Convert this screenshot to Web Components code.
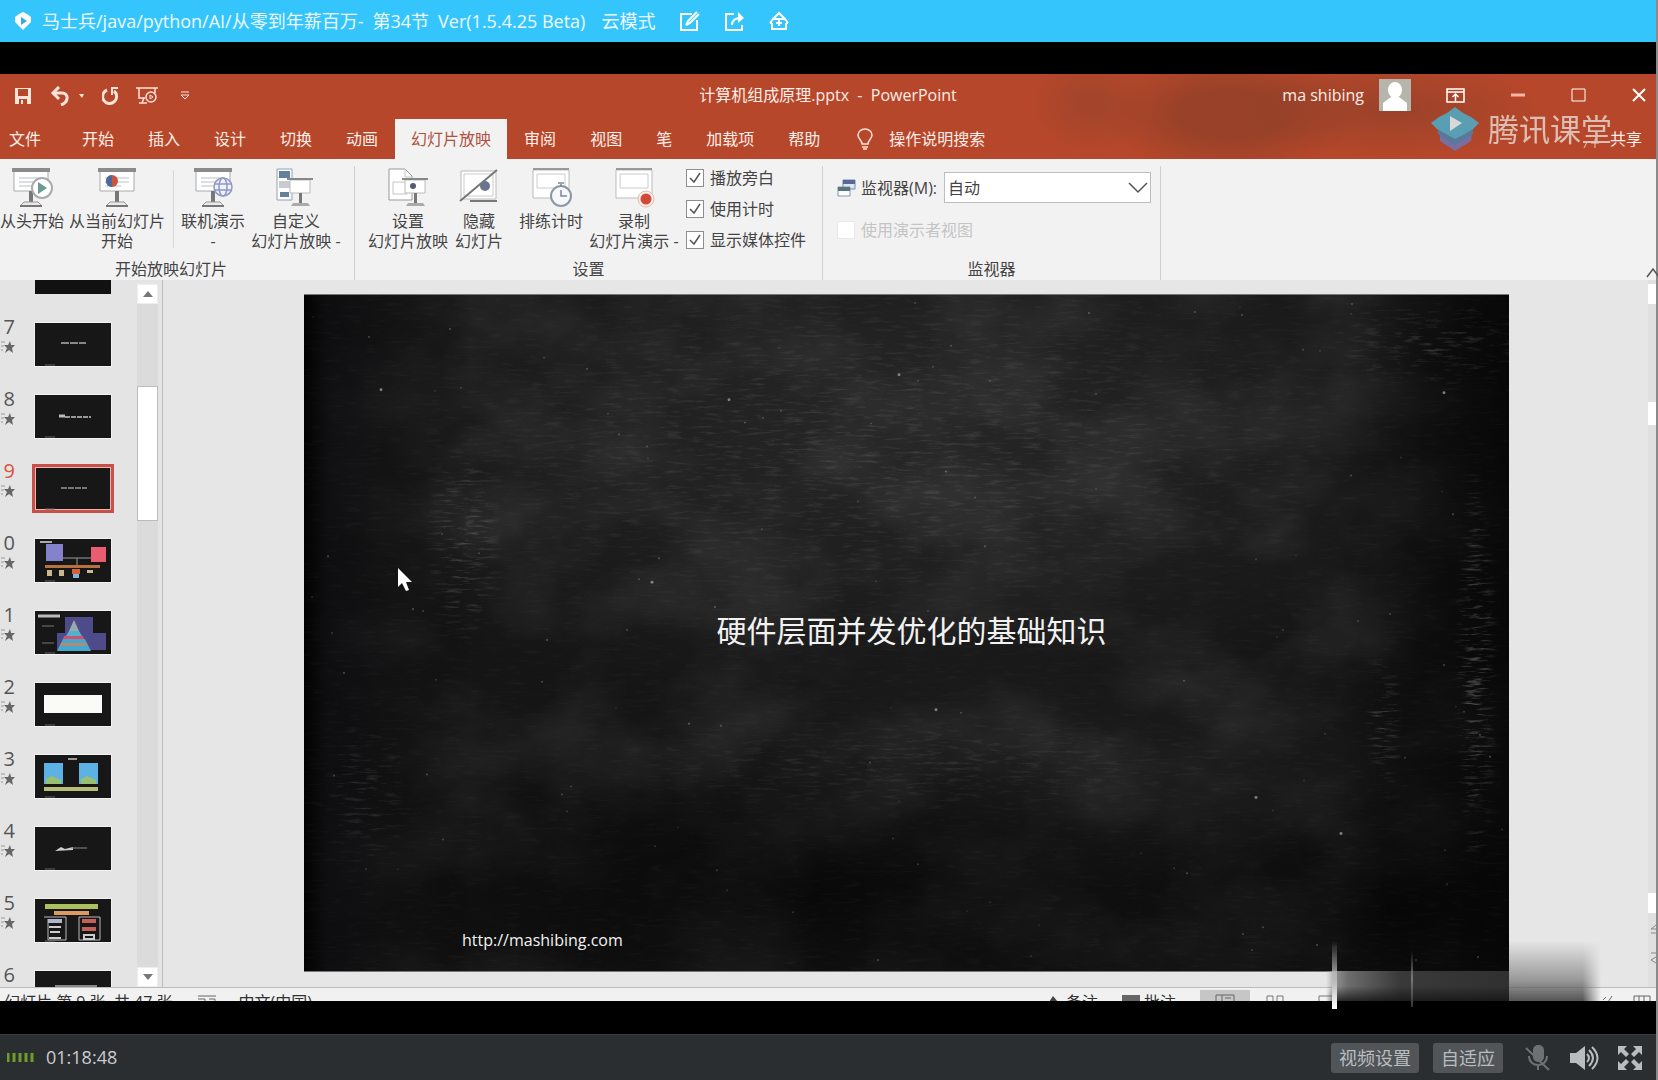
<!DOCTYPE html>
<html lang="zh-CN">
<head>
<meta charset="utf-8">
<title>计算机组成原理.pptx - PowerPoint</title>
<style>
html, body { margin: 0; height: 100%; background: #000; }
body { font: 16px/20px "Open Sans", "Noto Sans CJK SC", sans-serif; color: #444; overflow: hidden; }
class-player { height: 100vh; }
</style>
</head>
<body>
<class-player></class-player>
<script>
const define = (name, html) => {
  const t = document.createElement('template');
  t.innerHTML = '<style>*{box-sizing:border-box}button,input,select{font:inherit;color:inherit;margin:0}button{background:none;border:0;padding:0}svg{display:block;flex:none}</style>' + html;
  customElements.define(name, class extends HTMLElement {
    constructor() {
      super();
      this.attachShadow({ mode: 'open' }).append(t.content.cloneNode(true));
    }
  });
};

/* ---------- player title bar ---------- */
define('player-title', `
<style>
:host { display: flex; align-items: center; height: 42px; padding-left: 14px; background: #34c5fd; color: #eefaff; font-size: 18px; white-space: nowrap; flex: none; }
.name { display: flex; gap: 9px; margin: 0 16px 0 9px; }
.mode { margin-right: 24px; }
.tools { display: flex; gap: 23px; }
</style>
<svg width="19" height="20" viewBox="0 0 19 20"><path d="M9 1l4 2 4 3v5l-3 3-5 5-5-5-3-3V6l4-3z" fill="#fff"/><path d="M7 6l6 4-6 4z" fill="#34a9e6"/></svg>
<span class="name"><span>马士兵/java/python/AI/从零到年薪百万-</span><span>第34节</span><span>Ver(1.5.4.25 Beta)</span></span>
<span class="mode">云模式</span>
<div class="tools">
<button aria-label="编辑"><svg width="21" height="21" viewBox="0 0 21 21" fill="none" stroke="#fff" stroke-width="2"><path d="M13 3H2v16h16V9M7 14l2-4 9-9M7 14l4-2 9-9"/></svg></button>
<button aria-label="分享"><svg width="22" height="21" viewBox="0 0 22 21" fill="none" stroke="#fff" stroke-width="2"><path d="M11 3H3v16h16v-5M9 14c0-5 3-7 9-7"/><path d="M15 1l6 6-6 5z" fill="#fff" stroke="none"/></svg></button>
<button aria-label="主页"><svg width="22" height="21" viewBox="0 0 22 21" fill="none" stroke="#fff" stroke-width="2"><path d="M5 8l6-6 6 6M2 12l3-4h12l3 4M4 12v6h14v-6M2 12h2M18 12h2M11 9v6M8 12h6"/></svg></button>
</div>`);

/* ---------- PowerPoint title row ---------- */
define('ppt-title', `
<style>
:host { display: grid; grid-template-columns: 1fr auto 1fr; align-items: center; height: 42px; color: #fdeee9; white-space: nowrap; flex: none; }
.quick { display: flex; align-items: center; gap: 14px; padding: 2px 0 0 14px; }
.quick button:first-of-type { margin-right: 4px; }
.win { display: flex; align-items: center; justify-content: flex-end; padding-right: 10px; }
.win svg { margin-left: 15px; }
.win button svg { margin: 0; }
.win button { margin-left: 45px; }
.win button:first-of-type { margin-left: 35px; }
</style>
<div class="quick">
<button aria-label="保存"><svg width="18" height="18" viewBox="0 0 18 18"><path d="M1 1h16v16H1z" fill="#fde3da"/><path d="M4 2h10v7H4zM5 12h8v5H5z" fill="#b7472a"/><path d="M3 9h12v2H3zM7 13h2v4H7z" fill="#fde3da"/></svg></button>
<button aria-label="撤消"><svg width="38" height="20" viewBox="0 0 38 20" fill="none" stroke="#fde3da" stroke-width="3"><path d="M3 7h9c7 0 7 9-1 12"/><path d="M9 1L3 7l6 6"/><path d="M29 8h5l-2 4z" fill="#fde3da" stroke="none"/></svg></button>
<button aria-label="恢复"><svg width="20" height="20" viewBox="0 0 20 20" fill="none" stroke="#fde3da" stroke-width="3"><path d="M5 4a7 7 0 1 0 7 1"/><path d="M16 2h-6v7" stroke-width="2"/></svg></button>
<button aria-label="从头开始"><svg width="22" height="20" viewBox="0 0 22 20" fill="none" stroke="#fde3da" stroke-width="2"><path d="M0 2h22M3 2v10h6M19 2v5M3 17h8M8 12l-2 5" stroke-width="1.500"/><circle cx="15" cy="11" r="5" stroke-width="1.500"/><path d="M14 9l3 2-3 2z" stroke-width="1"/></svg></button>
<button aria-label="自定义快速访问工具栏"><svg width="24" height="12" viewBox="0 0 24 12" fill="none" stroke="#fde3da"><path d="M9 2h8M9 5h8l-4 4z"/></svg></button>
</div>
<span>计算机组成原理.pptx&nbsp; -&nbsp; PowerPoint</span>
<div class="win">
<span>ma shibing</span>
<svg width="32" height="32" viewBox="0 0 32 32"><path d="M0 0h32v32H0z" fill="#b5b5ab"/><ellipse cx="16" cy="11" rx="7" ry="8" fill="#fff"/><path d="M4 32V24l8-6h8l8 6v8z" fill="#fff"/></svg>
<button aria-label="功能区显示选项"><svg width="19" height="15" viewBox="0 0 19 15" fill="none" stroke="#fff" stroke-width="1.500"><path d="M1 1h17v13H1zM1 4h17M9.500 13V7M6.500 9l3-3 3 3"/></svg></button>
<button aria-label="最小化"><svg width="16" height="14"><path d="M1 7h14" stroke="#ffb6a2" stroke-width="3"/></svg></button>
<button aria-label="最大化"><svg width="16" height="14"><path d="M1 1h13v12H1z" fill="none" stroke="#fff"/></svg></button>
<button aria-label="关闭"><svg width="14" height="14"><path d="M1 1l12 12M13 1L1 13" stroke="#fff" stroke-width="2"/></svg></button>
</div>`);

/* ---------- ribbon tabs ---------- */
define('ppt-tabs', `
<style>
:host { display: flex; height: 43px; padding: 3px 14px 0 0; color: #fdeee9; white-space: nowrap; flex: none; position: relative; }
button { padding: 0 17px; }
button:first-of-type { padding: 0 24px 0 9px; }
.on { background: #f3f2f3; color: #b0513c; padding: 0 16px; }
.tell { display: flex; align-items: center; gap: 16px; padding-left: 20px; }
.share { margin-left: auto; padding: 0; display: flex; align-items: center; gap: 10px; }
.mark { position: absolute; right: 44px; top: -10px; display: flex; align-items: center; gap: 8px; font-size: 31px; line-height: 44px; color: #e4d3cb; opacity: .85; }
</style>
<button>文件</button><button>开始</button><button>插入</button><button>设计</button><button>切换</button><button>动画</button><button class="on">幻灯片放映</button><button>审阅</button><button>视图</button><button>笔</button><button>加载项</button><button>帮助</button>
<button class="tell"><svg width="16" height="22" viewBox="0 0 16 22" fill="none" stroke="#fde3da" stroke-width="1.500"><path d="M5 16c0-4-4-5-4-9a7 6 0 0 1 14 0c0 4-4 5-4 9zM5 19h6M6 21h4"/></svg>操作说明搜索</button>
<button class="share"><svg width="18" height="20" viewBox="0 0 18 20" fill="none" stroke="#f0c3b4"><path d="M2 19l3-6M13 10v9M9 14h8"/></svg>共享</button>
<div class="mark"><svg width="50" height="46" viewBox="0 0 50 46"><path d="M25 14l17 12-1 9-16 10-15-10V26z" fill="#6f76b4"/><path d="M25 24l18-4v8L25 39 8 28v-8z" fill="#4a82ad"/><path d="M25 1l8 6 8 4 8 6-6 6-8 5-10 5-9-5-9-5-6-6 8-6 8-4z" fill="#4caecb"/><path d="M20 10l12 7-12 8z" fill="#e1f2f5"/></svg><span>腾讯课堂</span></div>`);

/* ---------- ribbon pieces ---------- */
define('ribbon-button', `
<style>
:host { display: block; flex: none; }
button { display: flex; flex-direction: column; align-items: center; width: 100%; text-align: center; line-height: 20px; white-space: nowrap; }
.pic { height: 43px; width: 42px; }
</style>
<button><span class="pic"><slot name="icon"></slot></span><span><slot></slot></span></button>`);

define('ribbon-group', `
<style>
:host { display: flex; flex-direction: column; justify-content: space-between; height: 114px; border-right: 1px solid #cfcfcf; flex: none; box-sizing: border-box; }
.row { display: flex; align-items: flex-start; }
.cap { text-align: center; line-height: 22px; height: 22px; }
</style>
<div class="row"><slot></slot></div><div class="cap"><slot name="caption"></slot></div>`);

define('check-option', `
<style>
:host { display: block; }
label { display: flex; align-items: center; gap: 6px; height: 31px; white-space: nowrap; }
.box { position: relative; display: flex; }
input { appearance: none; width: 18px; height: 18px; border: 1px solid #8d8d8d; background: #fff; }
svg { position: absolute; left: 0; top: 0; pointer-events: none; }
:host([off]) label { color: #c4c4c4; }
:host([off]) input { border-color: #e8e8e8; }
:host([off]) svg { display: none; }
</style>
<label><span class="box"><input type="checkbox"><svg width="18" height="18" viewBox="0 0 18 18" fill="none" stroke="#555" stroke-width="1.500"><path d="M4 9l4 4 6-9"/></svg></span><slot></slot></label>`);

const board = '<path d="M2 2h34v21H2z" fill="#fff" stroke="#aaa"/><path d="M0 0h38v4H0z" fill="#8b8b8b"/><path d="M17 23h4v12h-4z" fill="#777"/><path d="M12 34h14l4 4H8z" fill="#e9e9e9" stroke="#999"/><path d="M8 38h22" stroke="#777" stroke-width="2"/>';
const lines = '<path d="M7 10h24M7 14h24M7 18h16" stroke="#b9bfc8"/>';
const ico = (s) => `<svg slot="icon" width="42" height="40" viewBox="0 0 42 40">${s}</svg>`;

define('ppt-ribbon', `
<style>
:host { display: flex; height: 121px; padding-top: 7px; background: #f3f2f3; white-space: nowrap; flex: none; position: relative; }
svg { display: block; }
ribbon-button { margin-top: 2px; }
.first { padding-right: 12px; }
.sep { width: 1px; height: 78px; background: #d8d8d8; margin: 4px 7px 0 8px; }
.checks { display: flex; flex-direction: column; padding: 0 16px 0 6px; margin-top: -4px; }
.mon { display: flex; flex-direction: column; padding: 6px 9px 0 14px; gap: 11px; }
.mon div { display: flex; align-items: center; }
.mon label { margin: 0 7px 0 5px; }
.pick { position: relative; display: flex; align-items: center; }
select { appearance: none; width: 207px; height: 31px; border: 1px solid #bdbdbd; background: #fff; padding: 0 3px; border-radius: 0; }
.pick svg { position: absolute; right: 3px; pointer-events: none; }
.fold { position: absolute; right: -5px; bottom: 2px; }
</style>
<ribbon-group class="first">
<ribbon-button style="width:64px">${ico(`<g transform="translate(1)">${board}${lines}</g><circle cx="31" cy="20" r="10" fill="#fff" stroke="#aaa" stroke-width="2"/><path d="M27 14l9 6-9 6z" fill="#6b9c91"/>`)}从头开始</ribbon-button>
<ribbon-button style="width:96px;margin-left:5px">${ico(`<g transform="translate(2)">${board}${lines}<circle cx="14" cy="13" r="6" fill="#c9543a"/><path d="M14 13V7a6 6 0 0 0 0 12z" fill="#4a6a9e"/></g>`)}从当前幻灯片<br>开始</ribbon-button>
<span class="sep"></span>
<ribbon-button style="width:64px">${ico(`<g transform="translate(2)">${board}${lines}</g><g fill="#eef1f8" stroke="#8f98c4" stroke-width="1.500"><circle cx="31" cy="19" r="9"/><ellipse cx="31" cy="19" rx="4" ry="9"/><path d="M23 16h16M23 22h16"/></g>`)}联机演示<br>-</ribbon-button>
<ribbon-button style="width:92px;margin-left:5px">${ico(`<path d="M2 1h15v31H2z" fill="#fff" stroke="#8fa0b4"/><path d="M4 3h11v7H4zM5 24h9v5H5z" fill="#65809c"/><path d="M4 13h11v7H4z" fill="#c8ccd2"/><path d="M15 12h20v13H15z" fill="#fff" stroke="#bbb"/><path d="M12 10h26v2H12z" fill="#888"/><path d="M24 25h3v10h-3z" fill="#777"/><path d="M18 35h15l2 3H16z" fill="#aaa"/>`)}自定义<br>幻灯片放映 -</ribbon-button>
<span slot="caption">开始放映幻灯片</span></ribbon-group>
<ribbon-group>
<ribbon-button style="width:80px;margin-left:13px">${ico(`<path d="M2 1h16l7 7v24H2z" fill="#fff" stroke="#999"/><path d="M18 1v8h7M6 14h14v12H6z" fill="none" stroke="#c4c4c4"/><path d="M18 12h20v13H18z" fill="#fff" stroke="#bbb"/><path d="M15 10h26v2H15z" fill="#888"/><circle cx="26" cy="18" r="3" fill="#555a70"/><path d="M27 25h3v10h-3z" fill="#777"/><path d="M21 35h15l2 3H19z" fill="#aaa"/>`)}设置<br>幻灯片放映</ribbon-button>
<ribbon-button style="width:48px;margin-left:7px">${ico(`<path d="M3 3h35v28H3z" fill="#fff" stroke="#bbb"/><path d="M6 6h29v22H6z" fill="none" stroke="#ccc"/><circle cx="27" cy="18" r="5" fill="#6a7390"/><path d="M2 33L39 2M12 33h27" stroke="#777" stroke-width="2"/>`)}隐藏<br>幻灯片</ribbon-button>
<ribbon-button style="width:64px;margin-left:16px">${ico(`<path d="M3 2h36v28H3z" fill="#fff" stroke="#bbb"/><path d="M3 1h36" stroke="#999" stroke-width="2"/><path d="M7 6h28v14H7z" fill="none" stroke="#ccc"/><circle cx="31" cy="28" r="10" fill="#f6f8fb" stroke="#8b97a8" stroke-width="2"/><path d="M28 15h6M31 16v3M31 22v6h6" fill="none" stroke="#7b8798" stroke-width="1.500"/>`)}排练计时</ribbon-button>
<ribbon-button style="width:92px;margin-left:5px">${ico(`<path d="M3 2h36v28H3z" fill="#fff" stroke="#bbb"/><path d="M3 1h36" stroke="#999" stroke-width="2"/><path d="M7 6h28v14H7z" fill="none" stroke="#ccc"/><circle cx="33" cy="31" r="8" fill="#fbeee9" stroke="#e3bdb2"/><circle cx="33" cy="31" r="5.500" fill="#cf4b38"/>`)}录制<br>幻灯片演示 -</ribbon-button>
<div class="checks"><check-option>播放旁白</check-option><check-option>使用计时</check-option><check-option>显示媒体控件</check-option></div>
<span slot="caption">设置</span></ribbon-group>
<ribbon-group>
<div class="mon"><div>
<svg width="19" height="18" viewBox="0 0 19 18"><path d="M6 1h12v9H6z" fill="#dfe5f2" stroke="#7587b5"/><path d="M6 1h12v4H6z" fill="#566894"/><path d="M1 8h12v9H1z" fill="#fff" stroke="#8793ae"/><path d="M1 8h12v4H1z" fill="#56777f"/></svg>
<label for="m">监视器(M):</label><span class="pick"><select id="m"><option>自动</option></select><svg width="20" height="12" viewBox="0 0 20 12" fill="none" stroke="#555" stroke-width="1.500"><path d="M1 1l9 9 9-9"/></svg></span></div>
<check-option off>使用演示者视图</check-option></div>
<span slot="caption">监视器</span></ribbon-group>
<svg class="fold" width="16" height="10" fill="none" stroke="#555" stroke-width="1.500"><path d="M2 9l6-8 6 8"/></svg>`);

/* ---------- slide thumbnails ---------- */
define('slide-thumb', `
<style>
:host { display: grid; grid-template-columns: 14px 76px; column-gap: 21px; height: 72px; align-items: start; flex: none; color: #555; font-size: 20px; }
.no { display: flex; flex-direction: column; align-items: flex-end; line-height: 16px; width: 15px; margin-top: -4px; }
.no svg { margin-top: 6px; }
:host([sel]) { color: #d8553f; }
.pic { height: 43px; background: #171717; overflow: hidden; outline: 1px solid #f2f2f2; }
:host([sel]) .pic { outline: 3px solid #c9504a; box-shadow: inset 0 0 0 1px #e8b7ad; }
</style>
<div class="no"><slot></slot><svg width="14" height="12" viewBox="0 0 14 12"><path d="M9 0l1 4h4l-3 3 1 5-4-3-4 3 2-5-3-3h4z" fill="#666"/><path d="M0 1h4M0 5h3M0 9h2" stroke="#999"/></svg></div>
<div class="pic"><slot name="art"></slot></div>`);

const art = (s) => `<svg slot="art" width="76" height="43" viewBox="0 0 76 43">${s}<path d="M10 42h10" stroke="#666"/></svg>`;
define('thumb-list', `
<style>
:host { display: flex; width: 163px; background: #e5e4e5; border-right: 1px solid #bdbdbd; overflow: hidden; flex: none; box-sizing: border-box; }
.list { flex: 1; display: flex; flex-direction: column; height: 0; }
.top { height: 14px; width: 76px; margin: 0 0 29px 35px; background: #111; flex: none; }
.bar { width: 21px; margin: 4px 4px 0 0; background: #dcdbdc; display: flex; flex-direction: column; }
.bar button { height: 20px; background: #fff; display: flex; align-items: center; justify-content: center; border: 1px solid #eee; }
.thumb { height: 135px; margin-top: 82px; background: #fff; border: 1px solid #bbb; }
.bar button:last-child { margin-top: auto; }
svg { display: block; }
</style>
<div class="list"><div class="top"></div>
<slide-thumb>7${art('<path d="M26 20h25" stroke="#888" stroke-width="2" stroke-dasharray="8 1"/>')}</slide-thumb>
<slide-thumb>8${art('<path d="M24 21h6" stroke="#bbb" stroke-width="3"/><path d="M30 22h26" stroke="#999" stroke-width="2" stroke-dasharray="5 1"/>')}</slide-thumb>
<slide-thumb sel>9${art('<path d="M26 21h26" stroke="#777" stroke-width="2" stroke-dasharray="6 1"/>')}</slide-thumb>
<slide-thumb>0${art('<path d="M5 3h12" stroke="#aaa" stroke-width="2"/><path d="M11 5h17v17H11z" fill="#8382ca"/><path d="M56 8h15v15H56z" fill="#ea5c70"/><path d="M28 19h28M42 19v8" stroke="#999"/><path d="M10 26h55v3H10z" fill="#b5713f"/><path d="M12 31h5v6h-5zM24 31h5v6h-5zM52 31h6v3h-6z" fill="#c9b98f"/><path d="M37 30h8v5h-8z" fill="#d4603c"/><path d="M38 35h6v4h-6z" fill="#7cb8d8"/>')}</slide-thumb>
<slide-thumb>1${art('<path d="M3 5h22" stroke="#bbb" stroke-width="3"/><path d="M7 15h12M7 32h12" stroke="#777"/><path d="M30 6h28v16h13v17H22V22h8z" fill="#4d4b8a"/><path d="M39 9l5 11h-10z" fill="#9aa"/><path d="M34 20h10l3 5H31z" fill="#53b0d0"/><path d="M29 25h19l1 3H28z" fill="#d4506a"/><path d="M28 28h22l6 12H22z" fill="#45a8cc"/><path d="M26 32h26v3H25z" fill="#b08b76"/>')}</slide-thumb>
<slide-thumb>2${art('<path d="M9 12h58v18H9z" fill="#fafaf8"/>')}</slide-thumb>
<slide-thumb>3${art('<path d="M33 4h9" stroke="#999" stroke-width="2"/><path d="M9 8h19v21H9zM44 8h19v21H44z" fill="#5cb2e4"/><path d="M11 29v-5l6-3 9 4v4zM46 29v-5l6-3 9 4v4z" fill="#98c070"/><path d="M9 32h54v4H9z" fill="#b5bd77"/>')}</slide-thumb>
<slide-thumb>4${art('<path d="M20 24l6-4 4 2 8-2v3z" fill="#ccc"/><path d="M36 21h16" stroke="#888"/>')}</slide-thumb>
<slide-thumb>5${art('<path d="M10 5h53v5H10z" fill="#abc05e"/><path d="M19 12h35v4H19z" fill="#dc9a62"/><path d="M9 18h22v23H13V20M44 18h21v23H44z" fill="none" stroke="#bbb"/><path d="M13 20h14v4H13z" fill="#b0b5cc"/><path d="M47 20h14v4H47zM47 28h14v4H47z" fill="#c65e5a"/><path d="M14 28h12M15 33h10M14 39h12M49 36h10v4H49z" stroke="#ccc" fill="none" stroke-width="2"/>')}</slide-thumb>
<slide-thumb>6${art('<path d="M20 16h42" stroke="#888" stroke-width="4"/>')}</slide-thumb>
</div>
<div class="bar"><button aria-label="向上"><svg width="10" height="6"><path d="M0 6l5-6 5 6z" fill="#777"/></svg></button><div class="thumb"></div><button aria-label="向下"><svg width="10" height="6"><path d="M0 0h10L5 6z" fill="#777"/></svg></button></div>`);

/* ---------- slide canvas ---------- */
let seed = 11;
const rnd = () => (seed = (seed * 16807) % 2147483647) / 2147483647;
let specks = '';
for (let i = 0; i < 120; i++) {
  const x = Math.round(rnd() * 1190 + 8), y = Math.round(rnd() * 660 + 8), o = (rnd() * .3 + .1).toFixed(2);
  specks += `<circle cx="${x}" cy="${y}" r="1" fill="#bbb" opacity="${o}"/>`;
}
for (const [x, y] of [[77, 95], [595, 80], [1140, 98], [632, 416], [1037, 540], [425, 105], [348, 288], [952, 504]]) {
  specks += `<ellipse cx="${x}" cy="${y}" rx="1.500" ry="1.500" fill="#aaa" opacity=".7"/>`;
}
define('slide-canvas', `
<style>
:host { display: flex; flex: 1; padding: 14px 139px 15px 141px; background: #e6e6e6; min-width: 0; }
.slide { position: relative; flex: 1; background: #151515; border-top: 1px solid #777; border-bottom: 1px solid #777; color: #f2f2f2; display: flex; flex-direction: column; overflow: hidden; }
.chalk { position: absolute; inset: 0; width: 100%; height: 100%; }
h1 { position: relative; margin: 316px 0 0 10px; font: 400 30px/40px "Open Sans", "Noto Sans CJK SC", sans-serif; text-align: center; }
a { position: relative; color: inherit; text-decoration: none; margin: auto auto 21px 158px; line-height: 20px; }
.cursor { position: absolute; left: 93px; top: 273px; }
</style>
<div class="slide">
<svg class="chalk" viewBox="0 0 1205 678" preserveAspectRatio="none">
<defs>
<filter id="streak" x="0" y="0" width="1" height="1"><feTurbulence type="fractalNoise" baseFrequency="0.05 0.35" numOctaves="4" seed="4"/><feColorMatrix values="0 0 0 0 .7  0 0 0 0 .7  0 0 0 0 .7  1.6 0 0 0 -.82"/></filter>
<filter id="cloud" x="0" y="0" width="1" height="1"><feTurbulence type="fractalNoise" baseFrequency="0.008 0.012" numOctaves="4" seed="9"/><feColorMatrix values="0 0 0 0 .6  0 0 0 0 .6  0 0 0 0 .6  .5 0 0 0 -.18"/></filter>
<radialGradient id="g"><stop offset="0" stop-color="#fff" stop-opacity="1"/><stop offset="1" stop-color="#fff" stop-opacity="0"/></radialGradient>
<radialGradient id="k"><stop offset="0" stop-color="#000" stop-opacity=".6"/><stop offset="1" stop-color="#000" stop-opacity="0"/></radialGradient>
<linearGradient id="e"><stop offset="0" stop-color="#020203"/><stop offset=".02" stop-color="#0c0c0e" stop-opacity=".8"/><stop offset=".1" stop-color="#0e0f11" stop-opacity=".3"/><stop offset=".14" stop-color="#000" stop-opacity="0"/><stop offset=".86" stop-color="#000" stop-opacity="0"/><stop offset=".93" stop-color="#050505" stop-opacity=".5"/><stop offset="1" stop-color="#040404" stop-opacity=".8"/></linearGradient>
<mask id="m"><rect width="1205" height="678" fill="#1a1a1a"/><ellipse cx="580" cy="150" rx="480" ry="180" fill="url(#g)" opacity=".4"/><ellipse cx="160" cy="250" rx="40" ry="110" fill="url(#g)"/><ellipse cx="620" cy="470" rx="320" ry="50" fill="url(#g)" opacity=".35"/><ellipse cx="60" cy="500" rx="50" ry="80" fill="url(#g)" opacity=".5"/></mask>
<mask id="r"><ellipse cx="1172" cy="380" rx="22" ry="220" fill="url(#g)"/><ellipse cx="1080" cy="430" rx="20" ry="80" fill="url(#g)" opacity=".7"/><ellipse cx="1130" cy="50" rx="110" ry="50" fill="url(#g)" opacity=".4"/></mask>
</defs>
<ellipse cx="600" cy="130" rx="640" ry="300" fill="url(#g)" opacity=".08"/>
<ellipse cx="720" cy="480" rx="420" ry="120" fill="url(#g)" opacity=".04"/>
<rect width="1205" height="678" filter="url(#cloud)" opacity=".4"/>
<ellipse cx="480" cy="600" rx="620" ry="170" fill="url(#k)"/>
<ellipse cx="1100" cy="620" rx="300" ry="130" fill="url(#k)"/>
<rect width="1205" height="678" fill="url(#e)"/>
<g mask="url(#m)"><rect width="1205" height="678" filter="url(#streak)" opacity=".55"/></g>
<g mask="url(#r)"><rect width="1205" height="678" filter="url(#streak)" opacity=".8"/></g>
${specks}
</svg>
<h1>硬件层面并发优化的基础知识</h1>
<a href="http://mashibing.com">http://mashibing.com</a>
<svg class="cursor" width="16" height="24" viewBox="0 0 16 24"><path d="M1 0v19l4-4 4 8 3-1-3-8h6z" fill="#fff"/></svg>
</div>`);

define('edge-scroll', `
<style>
:host { display: flex; flex-direction: column; width: 8px; background: #e0e0e0; flex: none; }
div { background: #fff; height: 20px; }
.a { margin-top: 4px; } .b { margin-top: 98px; height: 23px; } .c { margin-top: 468px; }
svg { margin-top: 10px; }
</style><div class="a"></div><div class="b"></div><div class="c"></div><svg width="8" height="50" fill="none" stroke="#888"><path d="M8 2l-5 4h5M3 10h5M3 30h5M8 34l-5 3 5 3"/></svg>`);

/* ---------- status bar ---------- */
define('ppt-status', `
<style>
:host { display: flex; align-items: flex-start; height: 14px; border-top: 1px solid #bbb; background: #f1f1f1; white-space: nowrap; overflow: hidden; color: #333; flex: none; padding-top: 4px; box-sizing: border-box; }
.r { margin-left: auto; display: flex; padding-right: 5px; }
svg { margin-top: 3px; }
.on { background: #c6c6c6; width: 50px; margin-top: -2px; padding: 1px 15px; }
.page { margin: 0 24px 0 4px; }
</style>
<span class="page">幻灯片 第 9 张, 共 47 张</span>
<svg width="20" height="16" fill="none" stroke="#666"><path d="M1 1h18M1 4h7v9M12 4h6v9"/></svg>
<span style="margin-left:22px">中文(中国)</span>
<div class="r">
<svg width="18" height="16"><path d="M1 7l4-6 5 6z" fill="#444"/></svg><span style="margin-right:24px">备注</span>
<svg width="18" height="16"><path d="M0 0h18v16H0z" fill="#666"/></svg><span style="margin:0 24px 0 4px">批注</span>
<span class="on"><svg width="20" height="16" fill="none" stroke="#666"><path d="M1 1h18v14H1zM7 1v14M10 4h6"/></svg></span>
<svg style="margin-left:16px;margin-right:34px" width="18" height="16" fill="none" stroke="#777"><path d="M1 1h6v6H1zM11 1h6v6h-6z"/></svg>
<svg style="margin-right:265px" width="20" height="16" fill="none" stroke="#777"><path d="M1 1h18v14H1z"/></svg>
<svg style="margin-right:20px" width="10" height="16" fill="none" stroke="#666"><path d="M0 5l3-3M5 7l4-6"/></svg>
<svg width="18" height="16" fill="none" stroke="#666"><path d="M1 1h16v14H1zM6 1v6M11 1v6"/></svg>
</div>`);

define('ppt-window', `
<style>
:host { display: flex; flex-direction: column; flex: 1; min-height: 0; }
.head { background: radial-gradient(ellipse 130px 60px at 1230px 40px, rgba(145,64,40,.8) 40%, transparent), radial-gradient(ellipse 160px 50px at 1390px 35px, rgba(150,66,42,.8) 10%, transparent), radial-gradient(ellipse 60px 50px at 1090px 30px, rgba(155,68,43,.7) 20%, transparent), #b7472a; }
.work { display: flex; flex: 1; min-height: 0; }
</style>
<div class="head"><ppt-title></ppt-title><ppt-tabs></ppt-tabs></div>
<ppt-ribbon></ppt-ribbon>
<div class="work"><thumb-list></thumb-list><slide-canvas></slide-canvas><edge-scroll></edge-scroll></div>
<ppt-status></ppt-status>`);

/* ---------- player controls ---------- */
define('player-controls', `
<style>
:host { display: flex; align-items: center; height: 46px; padding: 0 13px 0 7px; background: #2b2e31; border-top: 1px solid #3a3a3c; color: #c9cccf; font-size: 18px; line-height: 22px; white-space: nowrap; flex: none; box-sizing: border-box; }
.t { margin-left: 12px; margin-right: auto; padding-bottom: 2px; }
.b { height: 30px; padding: 0 8px; background: #515558; border-radius: 3px; color: #b9bdc0; margin-right: 14px; line-height: 28px; }
.i { margin-left: 18px; }
.mic { margin-left: 8px; }
</style>
<svg width="27" height="12"><path d="M1 1v9M7 1v9M13 1v9M19 1v9M25 1v9" stroke="#6f9c2c" stroke-width="3"/></svg>
<span class="t">01:18:48</span>
<button class="b">视频设置</button><button class="b">自适应</button>
<button class="i mic" aria-label="麦克风"><svg width="26" height="28" viewBox="0 0 26 28" fill="none" stroke="#6d7174" stroke-width="2"><rect x="9" y="2" width="9" height="15" rx="4" fill="#6d7174"/><path d="M4 12c0 12 18 12 18 0M13 21v5M1 4l23 22"/></svg></button>
<button class="i" aria-label="音量"><svg width="30" height="28" viewBox="0 0 30 28" fill="none" stroke="#b9bdc0" stroke-width="2"><path d="M1 9h6l9-7v24l-9-7H1z" fill="#b9bdc0" stroke="none"/><path d="M18 10q4 4 0 8M20 6q8 8 0 16M23 3q11 11 0 22"/></svg></button>
<button class="i" aria-label="全屏"><svg width="26" height="26" viewBox="0 0 26 26"><path d="M1 1h9L7 4l5 5-3 3-5-5-3 3zM25 1v9l-3-3-5 5-3-3 5-5-3-3zM1 25v-9l3 3 5-5 3 3-5 5 3 3zM25 25h-9l3-3-5-5 3-3 5 5 3-3z" fill="#b9bdc0"/></svg></button>`);

/* ---------- whole player ---------- */
define('class-player', `
<style>
:host { display: flex; flex-direction: column; border-right: 2px solid #8a8a8a; box-sizing: border-box; background: #000; }
.stage { position: relative; display: flex; flex: 1; min-height: 0; padding: 32px 0 33px; }
.ghost { position: absolute; right: 54px; bottom: 27px; width: 276px; height: 66px; display: flex; }
.ghost i { display: block; }
.l { width: 183px; margin: 30px 0 6px; background: linear-gradient(180deg, transparent 50%, rgba(20,20,20,.8)), linear-gradient(90deg, #aaa, #6d6d6d 12%, #3a3a3a 40%, #303030); -webkit-mask-image: linear-gradient(90deg, transparent, #000 6%); mask-image: linear-gradient(90deg, transparent, #000 6%); }
.g { width: 92px; margin-bottom: 6px; background: linear-gradient(180deg, rgba(130,130,130,0), rgba(120,120,120,.7) 65%, #555); -webkit-mask-image: linear-gradient(90deg, #000 80%, transparent); mask-image: linear-gradient(90deg, #000 80%, transparent); }
.s { position: absolute; left: 6px; top: 0; width: 5px; height: 68px; background: linear-gradient(180deg, transparent, #bbb 60%, #fff); }
.u { position: absolute; left: 85px; top: 10px; width: 2px; height: 56px; background: linear-gradient(180deg, transparent, #777 50%, #333); }
</style>
<player-title></player-title>
<div class="stage"><ppt-window></ppt-window><div class="ghost"><i class="l"></i><i class="g"></i><i class="s"></i><i class="u"></i></div></div>
<player-controls></player-controls>`);

/* tick the options that are switched on */
const ribbon = document.querySelector('class-player').shadowRoot.querySelector('ppt-window').shadowRoot.querySelector('ppt-ribbon').shadowRoot;
ribbon.querySelectorAll('check-option').forEach((c) => {
  const box = c.shadowRoot.querySelector('input');
  if (c.hasAttribute('off')) box.disabled = true; else box.checked = true;
});
</script>
</body>
</html>
